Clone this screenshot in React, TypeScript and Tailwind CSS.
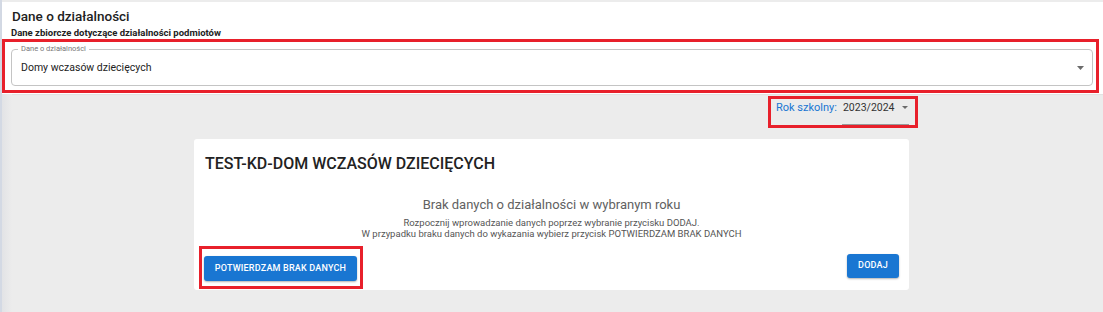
import React from "react";

function Caret({ className = "", w = 8, h = 4 }: { className?: string; w?: number; h?: number }) {
  return (
    <svg width={w} height={h} viewBox={`0 0 ${w} ${h}`} className={className}>
      <path d={`M0 0 L${w} 0 L${w / 2} ${h} Z`} fill="#6b6b6b" />
    </svg>
  );
}

export default function App() {
  return (
    <div className="flex w-[1103px] h-[312px] bg-[#ececec] font-['Roboto',_'Noto_Sans',_sans-serif] overflow-hidden">
      <div className="w-[2px] shrink-0 bg-[#d3d9e4]" />
      <div className="flex-1 flex flex-col relative">
        <div className="absolute left-0 top-[94px] bottom-0 w-[10px] bg-gradient-to-r from-[#e2e3e6] to-[#ececec]" />
        {/* header */}
        <div className="bg-white mt-[2px] h-[92px] flex flex-col shadow-[0_1px_1px_rgba(0,0,0,0.04)]">
          <div className="pl-[10px] pt-[5px] text-[13.5px] leading-[18px] font-medium text-[#222]">Dane o działalności</div>
          <div className="pl-[9px] mt-[1px] text-[9.5px] leading-[13px] font-bold text-[#222]">
            Dane zbiorcze dotyczące działalności podmiotów
          </div>
          <div className="w-[1097px] h-[54px] border-[3px] border-[#e8202b] pl-[6px] pr-[3px] pt-[7px]">
            <div className="relative h-[37px] border border-[#c4c4c4] rounded-[4px] flex items-center pl-[9px] pr-[8px]">
              <div className="absolute left-[6px] top-[-6px] bg-white px-[3px] text-[7.5px] leading-[10px] text-[#777]">
                Dane o działalności
              </div>
              <div className="flex-1 text-[10.5px] text-[#222] pt-[1px]">Domy wczasów dziecięcych</div>
              <Caret w={7} h={4} />
            </div>
          </div>
        </div>
        {/* school year */}
        <div className="flex justify-end pr-[185px] mt-[2px]">
          <div className="w-[150px] h-[32px] border-[3px] border-[#e8202b] flex pl-[5px] whitespace-nowrap">
            <div className="shrink-0 text-[11px] leading-[14px] pt-[2px] text-[#1976d2]">Rok szkolny:</div>
            <div className="shrink-0 ml-[5px] w-[67px] h-[26px] border-b border-[#9a9a9a] flex items-start pt-[2px]">
              <span className="flex-1 text-[10.5px] leading-[14px] text-[#333] pl-[1px]">2023/2024</span>
              <Caret className="mt-[5px] mr-[1px]" w={6} h={3} />
            </div>
          </div>
        </div>
        {/* card */}
        <div className="ml-[192px] mt-[11px] w-[715px] h-[151px] bg-white rounded-[3px] flex flex-col">
          <div className="pl-[11px] pt-[15px] text-[16px] leading-[20px] font-medium text-[#222]">
            TEST-KD-DOM WCZASÓW DZIECIĘCYCH
          </div>
          <div className="mt-[22px] text-center text-[13px] leading-[18px] text-[#616161]">
            Brak danych o działalności w wybranym roku
          </div>
          <div className="mt-[3px] text-center text-[9.5px] leading-[11px] text-[#555]">
            <div>Rozpocznij wprowadzanie danych poprzez wybranie przycisku DODAJ.</div>
            <div>W przypadku braku danych do wykazania wybierz przycisk POTWIERDZAM BRAK DANYCH</div>
          </div>
          <div className="mt-[7px] flex items-start justify-between pl-[5px] pr-[10px]">
            <div className="border-[3px] border-[#e8202b] pl-[2px] pr-[3px] pt-[5px] pb-[5px]">
              <button className="w-[153px] h-[25px] rounded-[3px] bg-[#1976d2] text-white text-[9px] font-medium tracking-[0.2px] shadow-[0_1px_2px_rgba(0,0,0,0.3)]">
                POTWIERDZAM BRAK DANYCH
              </button>
            </div>
            <button className="mt-[8px] w-[52px] h-[24px] rounded-[3px] bg-[#1976d2] text-white text-[9px] font-medium tracking-[0.2px] shadow-[0_1px_2px_rgba(0,0,0,0.3)]">
              DODAJ
            </button>
          </div>
        </div>
      </div>
    </div>
  );
}
